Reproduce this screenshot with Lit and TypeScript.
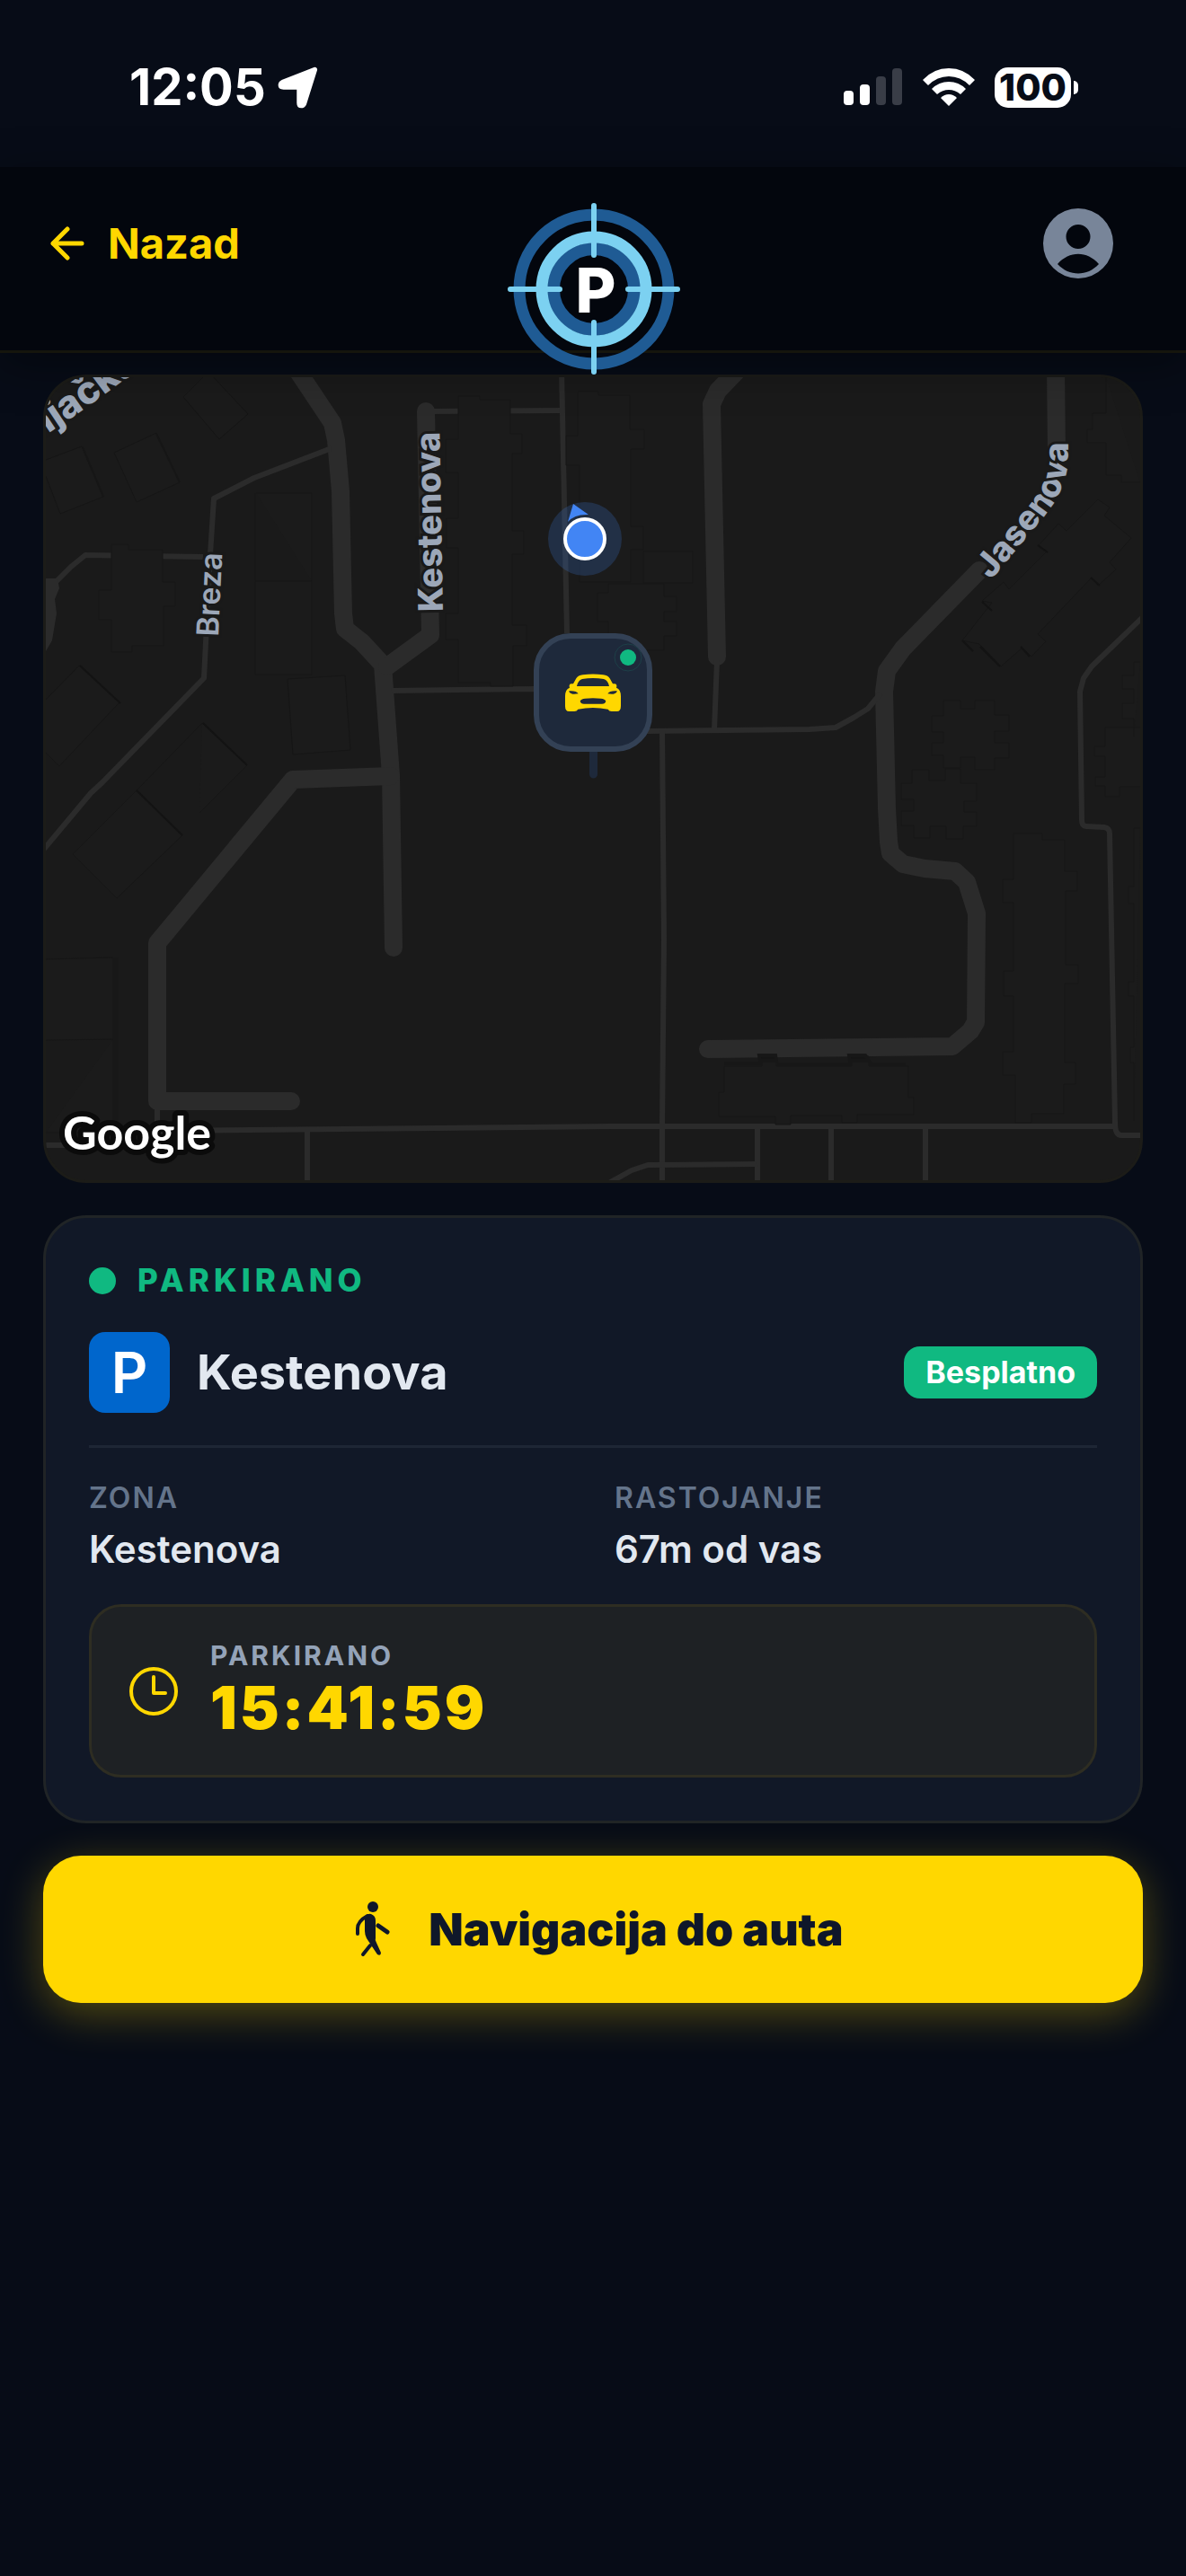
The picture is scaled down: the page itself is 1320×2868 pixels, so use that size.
import { LitElement, html, css, svg } from "lit";
import { customElement, property } from "lit/decorators.js";

@customElement("status-bar")
class StatusBar extends LitElement {
  static styles = css`
    :host {
      display: flex;
      justify-content: space-between;
      align-items: center;
      padding: 65px 120px 57px 144px;
      color: #fff;
      font-weight: 700;
      font-size: 56px;
      line-height: 64px;
    }
    .group {
      display: flex;
      align-items: center;
    }
    .time {
      gap: 12px;
    }
    .arrow {
      width: 50px;
      height: 50px;
    }
    .right {
      gap: 22px;
    }
    .signal {
      width: 66px;
      height: 44px;
    }
    .wifi {
      width: 58px;
      height: 44px;
    }
    .battery {
      display: flex;
      align-items: center;
      gap: 3px;
    }
    .level {
      width: 85px;
      height: 45px;
      border-radius: 15px;
      background: #fff;
      color: #070c17;
      font-size: 41px;
      font-weight: 800;
      line-height: 45px;
      text-align: center;
    }
    .nub {
      width: 5px;
      height: 15px;
      border-radius: 0 5px 5px 0;
      background: #fff;
    }
  `;
  render() {
    return html`
      <div class="group time">
        <span>12:05</span>
        <svg class="arrow" viewBox="0 0 46 46" aria-hidden="true">
          <path
            d="M39 5 L28 40 Q27 42 25 42 Q23 42 23 39 V24 Q23 23 22 23 H7 Q4 23 4 21 Q4 19 6 18 Z"
            fill="#fff" stroke="#fff" stroke-width="5" stroke-linejoin="round"
          />
        </svg>
      </div>
      <div class="group right">
        <svg class="signal" viewBox="0 0 66 44" aria-hidden="true">
          <rect x="0" y="26" width="11" height="16" rx="4" fill="#fff" />
          <rect x="18" y="19" width="11" height="23" rx="4" fill="#fff" />
          <rect x="36" y="10" width="11" height="32" rx="4" fill="#393d47" />
          <rect x="54" y="1" width="11" height="41" rx="4" fill="#393d47" />
        </svg>
        <svg class="wifi" viewBox="0 0 58 44" aria-hidden="true" fill="#fff">
          <path d="M0 14 Q12 1 29 1 T58 14 L52 20 Q42 10 29 10 T6 20 Z" />
          <path d="M10 24 Q18 16 29 16 T48 24 L42 30 Q36 25 29 25 T16 30 Z" />
          <path d="M20 34 Q24 30 29 30 T38 34 L29 43 Z" />
        </svg>
        <div class="battery">
          <span class="level">100</span>
          <span class="nub"></span>
        </div>
      </div>
    `;
  }
}

@customElement("app-header")
class AppHeader extends LitElement {
  static styles = css`
    :host {
      display: block;
      position: relative;
      z-index: 1;
      background: #03060d;
      border-bottom: 3px solid #15150d;
      box-shadow: 0 12px 48px rgba(0, 0, 0, 0.4);
    }
    .row {
      display: flex;
      justify-content: space-between;
      align-items: center;
      height: 170px;
      padding: 0 72px 34px 50px;
    }
    button {
      border: 0;
      padding: 0;
      background: none;
      font: inherit;
      color: inherit;
    }
    .back {
      display: flex;
      align-items: center;
      gap: 22px;
      color: #ffd700;
      font-size: 47px;
      font-weight: 700;
      line-height: 58px;
    }
    .back svg {
      width: 48px;
      height: 48px;
    }
    .profile {
      display: flex;
    }
    .profile svg {
      width: 96px;
      height: 96px;
    }
    .logo {
      position: absolute;
      left: 50%;
      top: 36px;
      width: 200px;
      height: 200px;
      margin-left: -99px;
    }
    .logo text {
      font-weight: 800;
      font-size: 69px;
    }
  `;
  render() {
    return html`
      <div class="row">
        <button class="back" type="button">
          <svg viewBox="0 0 48 48" fill="none" stroke="#ffd700" stroke-width="5"
            stroke-linecap="round" stroke-linejoin="round" aria-hidden="true">
            <path d="M25 8 L9 24 L25 40 M9 24 H41" />
          </svg>
          Nazad
        </button>
        <button class="profile" type="button" aria-label="Profil">
          <svg viewBox="-48 -48 96 96" aria-hidden="true">
            <path
              fill="#788599" fill-rule="evenodd"
              d="M0 -39 A39 39 0 1 1 0 39 A39 39 0 1 1 0 -39 Z
                 M0 -21 A13 13 0 1 0 0 6 A13 13 0 1 0 0 -21 Z
                 M-23 23 C-10 8 10 8 23 23 C10 37 -10 37 -23 23 Z"
            />
          </svg>
        </button>
      </div>
      <svg class="logo" viewBox="-100 -100 200 200" fill="none" aria-hidden="true">
        <circle r="83" stroke="#1f5b94" stroke-width="13" />
        <circle r="45" stroke="#1f5b94" stroke-width="14" />
        <circle r="58" stroke="#7cd1f1" stroke-width="13" />
        <path
          d="M-93 0 H-38 M93 0 H38 M0 -93 V-38 M0 92 V37"
          stroke="#7cd1f1" stroke-width="6" stroke-linecap="round"
        />
        <text x="2" y="26" text-anchor="middle" fill="#fff">P</text>
      </svg>
    `;
  }
}

const wideRoads = [
  "M328 408 L370 471 L374 490 L379 547 L382 683 L384 700 L403 715 L426 740 L435 863 L438 1055",
  "M474 458 L479 707 L431 742",
  "M435 864 L326 868 L175 1050 V1226 H324",
  "M825 408 L799 435 L792 450 L798 731",
  "M1175 408 L1176 506",
  "M1090 635 L1005 722 L987 747 L984 770 L987 900 L989 937 L991 950 L1005 962 L1029 967 L1063 970 L1076 982 L1087 1017 L1086 1138 L1080 1148 L1060 1165 L788 1168",
];

const narrowRoads = [
  "M369 499 L283 532 L238 555 L234 617 L227 755 L114 871 L101 883 L45 950",
  "M226 620 L95 618 L79 631 L60 650",
  "M483 458 L626 457",
  "M625 412 L631 705",
  "M436 769 L595 767 L660 790 L721 814 L901 812 L930 810 L950 799 L966 789 L980 772",
  "M798 735 L795 813",
  "M737 813 L739 1046 L737 1253 V1320",
  "M1275 684 L1215 742 L1206 755 L1202 770 L1204 913 Q1204 920 1209 920 L1229 921 Q1235 922 1235 928 L1241 1250 Q1241 1264 1248 1264 H1275",
  "M175 1226 V1259 L680 1254 H1240",
  "M45 1275 H76",
  "M342 1258 V1320",
  "M843 1254 V1320 M925 1254 V1320 M1030 1254 V1320",
  "M843 1296 L721 1297 L703 1303 L676 1318",
];

const buildings = [
  "M51 512 L91 497 L115 553 L67 572 L51 530",
  "M127 504 L174 482 L200 537 L152 559 Z",
  "M204 442 L232 414 L276 461 L244 489 Z",
  "M285 549 H347 V751 H284 V647 H347 M284 647 V549",
  "M320 756 L384 752 L390 835 L326 840 Z",
  "M124 606 H143 V612 H181 V648 H195 V675 H182 V719 H147 V726 H124 V690 H110 V657 H124 Z",
  "M51 779 L88 741 L133 782 L66 853 L51 838",
  "M225 805 L275 852 L222 905 M152 880 L203 930 L130 1000 L81 951 L152 880 L225 805",
  "M51 1068 L126 1066 V1157 L51 1158 M126 1157 V1261 H51",
  "M510 441 H534 V445 H568 V483 H581 V505 H570 V591 H583 V617 H570 V696 H586 V719 H571 V764 H546 V760 H510 V712 H496 V683 H510 V610 H497 V577 H510 V526 H496 V489 H510 Z",
  "M643 436 H666 V440 H701 V478 H717 V500 H702 V586 H716 V612 H702 V648 H645 V518 H630 V485 H643 Z",
  "M716 614 H771 V649 H716 Z",
  "M677 650 H739 V664 H753 V681 H739 V692 H753 V708 H739 V724 H677 V692 H665 V660 H677 Z",
  "M1222 556 L1235 565 L1229 574 L1259 599 L1235 626 L1242 634 L1222 652 L1215 643 L1155 706 L1164 714 L1148 731 L1138 721 L1114 742 L1090 717 L1071 713 L1104 671 L1093 669 L1117 648 L1123 656 L1165 614 L1156 607 L1178 583 L1187 591 Z",
  "M1231 420 V460 H1216 V478 H1210 V493 H1231 V529 H1248 V537 H1269",
  "M1050 780 H1069 V789 H1085 V780 H1107 V796 H1123 V814 H1107 V827 H1123 V844 H1107 V857 H1085 V843 H1069 V855 H1050 V841 H1037 V827 H1050 V815 H1037 V797 H1050 Z",
  "M1015 857 H1034 V869 H1052 V856 H1069 V872 H1087 V892 H1073 V904 H1087 V920 H1072 V934 H1053 V920 H1035 V933 H1017 V919 H1003 V903 H1017 V890 H1003 V872 H1015 Z",
  "M1128 928 H1160 V935 H1185 V970 H1199 V992 H1186 V1074 H1200 V1095 H1185 V1183 H1197 V1207 H1184 V1240 H1148 V1250 H1130 V1197 H1116 V1171 H1128 V1109 H1117 V1081 H1128 V1005 H1116 V979 H1128 Z",
  "M1269 737 H1262 V752 H1249 V767 H1262 V783 H1249 V800 H1262 V820 M1269 810 H1230 V831 H1218 V842 H1230 V865 H1219 V875 H1230 V887 H1246 V876 H1269",
  "M1269 922 H1262 V987 H1256 V1006 H1262 V1093 H1256 V1109 H1262 V1166 H1258 V1183 H1262 V1248",
  "M806 1187 H848 V1176 H864 V1187 H948 V1176 H967 V1187 H1011 V1222 H1017 V1241 H954 V1250 H937 V1242 H880 V1252 H863 V1243 H800 V1216 H806 Z",
];

@customElement("parking-map")
class ParkingMap extends LitElement {
  static styles = css`
    :host {
      display: block;
      overflow: hidden;
      border: 3px solid #1c1c18;
      border-radius: 48px;
      background: #1a1a1a;
    }
    svg {
      display: block;
      width: 100%;
      height: auto;
    }
    .label {
      fill: #9ca7b8;
      stroke: #191919;
      stroke-width: 6px;
      paint-order: stroke;
      font-weight: 800;
      font-size: 38px;
    }
    .major {
      font-size: 43px;
    }
    .minor {
      font-weight: 600;
      font-size: 34px;
    }
    .brand {
      fill: #fff;
      stroke: #0b0b0b;
      stroke-width: 12px;
      stroke-linejoin: round;
      paint-order: stroke;
      font-family: Lato, "Liberation Sans", sans-serif;
      font-weight: 700;
      font-size: 52px;
    }
  `;
  render() {
    return html`
      <svg viewBox="51 420 1218 894" role="img" aria-label="Mapa parkinga">
        <g fill="none" stroke="#2b2b2b" stroke-linejoin="round">
          <g stroke-width="20" stroke-linecap="round">
            ${wideRoads.map((d) => svg`<path d=${d} />`)}
          </g>
          <g stroke-width="6">${narrowRoads.map((d) => svg`<path d=${d} />`)}</g>
          <path d="M51 644 H64 L66 655 L61 667 L63 683 L58 713 L51 725 Z" fill="#2b2b2b" stroke="none" />
        </g>
        <g fill="#1b1b1b" stroke="#161616" stroke-width="1">
          ${buildings.map((d) => svg`<path d=${d} />`)}
        </g>
        <path
          d="M845 1175 H863 L864 1181 H846 Z M945 1175 H963 L967 1181 H946 Z M806 1184 H848 M865 1185 H948 M967 1185 H1008"
          fill="#151515" stroke="#171717" stroke-width="4"
        />
        <path d="M89 741 L134 783 M226 805 L275 852 M152 880 L203 930
          M1071 713 L1083 725 M1091 720 L1113 742 M1136 720 L1146 731 M1155 607 L1166 615 M1214 643 L1224 652 M1093 670 L1104 680"
          fill="none" stroke="#131313" stroke-width="2" />
        <path d="M92 498 L115 553 M174 483 L200 537" fill="none" stroke="#161616" stroke-width="2" />
        <path d="M129 1066 V1258" fill="none" stroke="#181818" stroke-width="6" />

        <defs>
          <path id="street-1" d="M41 491 L80 465 Q102 450 130 429 L190 388" />
          <path id="street-2" d="M243 709 L248 600" />
          <path id="street-3" d="M493 681 L489 460" />
          <path id="street-4" d="M1103 646 L1156 582 Q1189 546 1189 508 V440" />
        </defs>
        <text class="label major"><textPath href="#street-1">njačka</textPath></text>
        <text class="label minor"><textPath href="#street-2">Breza</textPath></text>
        <text class="label"><textPath href="#street-3">Kestenova</textPath></text>
        <text class="label"><textPath href="#street-4">Jasenova</textPath></text>
        <text class="brand" x="70" y="1280">Google</text>

        <circle cx="651" cy="600" r="41" fill="#4285f4" fill-opacity="0.2" />
        <path d="M638 561 L655 573 Q640 572 632 581 Z" fill="#4285f4" />
        <circle cx="651" cy="600" r="22" fill="#4285f4" stroke="#fff" stroke-width="4" />

        <path d="M656 837 H665 V862 A4 4 0 0 1 656 862 Z" fill="#1e293b" />
        <rect x="597" y="708" width="126" height="126" rx="38" fill="#1e293b" stroke="#334155" stroke-width="6" />
        <circle cx="699" cy="732" r="15" fill="#1e293b" stroke="#1d4048" stroke-width="1" />
        <circle cx="699" cy="732" r="9" fill="#10b981" />
        <g transform="translate(580 540) scale(0.3333)">
          <path
            fill="#ffd700"
            d="M147 738 V706 Q147 682 162 677 Q158 664 168 664 H174 L184 646 Q190 636 206 634 Q240 629 274 634
               Q290 636 296 646 L306 664 H312 Q322 664 318 677 Q333 682 333 706 V738 Q333 756 320 756 H302
               Q294 756 290 749 Q240 739 190 749 Q186 756 178 756 H160 Q147 756 147 738 Z"
          />
          <path
            fill="#1e293b"
            d="M186 672 Q190 652 204 648 Q240 642 276 648 Q290 652 294 672 Z
               M160 688 Q184 686 191 697 Q166 702 160 690 Z
               M320 688 Q296 686 289 697 Q314 702 320 690 Z
               M197 722 Q200 714 214 713 Q240 710 266 713 Q280 714 283 722 Q281 731 270 731 H210 Q199 731 197 722 Z"
          />
        </g>
      </svg>
    `;
  }
}

@customElement("parking-card")
class ParkingCard extends LitElement {
  @property() zone = "Kestenova";
  @property() distance = "67m od vas";
  @property() elapsed = "15:41:59";

  static styles = css`
    :host {
      display: flex;
      flex-direction: column;
      gap: 36px;
      padding: 48px;
      border: 3px solid #202426;
      border-radius: 48px;
      background: #111827;
      color: #e2e8f0;
    }
    h2,
    dl,
    dd,
    p {
      margin: 0;
    }
    .status {
      display: flex;
      align-items: center;
      gap: 24px;
      color: #10b981;
      font-size: 35px;
      font-weight: 800;
      line-height: 43px;
      letter-spacing: 5px;
    }
    .dot {
      width: 30px;
      height: 30px;
      border-radius: 50%;
      background: #10b981;
    }
    .place {
      display: flex;
      align-items: center;
      gap: 30px;
    }
    .sign {
      width: 90px;
      height: 90px;
      border-radius: 18px;
      background: #0066cc;
      color: #fff;
      font-size: 63px;
      font-weight: 600;
      line-height: 90px;
      text-align: center;
    }
    h2 {
      flex: 1;
      font-size: 54px;
      font-weight: 700;
      line-height: 64px;
    }
    .badge {
      padding: 8px 24px;
      border-radius: 18px;
      background: #10b981;
      color: #fff;
      font-size: 34px;
      font-weight: 700;
      line-height: 42px;
    }
    .facts {
      display: grid;
      grid-template-columns: 1fr 1fr;
      gap: 48px;
    }
    .rule {
      height: 3px;
      background: #1e2635;
    }
    dt {
      margin-bottom: 12px;
      color: #64748b;
      font-size: 32px;
      font-weight: 600;
      line-height: 40px;
      letter-spacing: 2px;
    }
    dd {
      font-size: 42px;
      font-weight: 600;
      line-height: 50px;
    }
    .timer {
      display: flex;
      align-items: center;
      gap: 36px;
      padding: 36px 42px;
      border: 3px solid #2e2d22;
      border-radius: 36px;
      background: #1e2124;
    }
    .timer svg {
      width: 54px;
      height: 54px;
    }
    .caption {
      color: #94a3b8;
      font-size: 30px;
      font-weight: 700;
      line-height: 37px;
      letter-spacing: 3px;
    }
    .elapsed {
      color: #ffd700;
      font-size: 66px;
      font-weight: 900;
      line-height: 78px;
      letter-spacing: 3px;
    }
  `;
  render() {
    return html`
      <div class="status"><span class="dot"></span>PARKIRANO</div>
      <div class="place">
        <span class="sign">P</span>
        <h2>${this.zone}</h2>
        <span class="badge">Besplatno</span>
      </div>
      <div class="rule"></div>
      <dl class="facts">
        <div>
          <dt>ZONA</dt>
          <dd>${this.zone}</dd>
        </div>
        <div>
          <dt>RASTOJANJE</dt>
          <dd>${this.distance}</dd>
        </div>
      </dl>
      <div class="timer">
        <svg viewBox="0 0 54 54" fill="none" stroke="#ffd700" stroke-width="4"
          stroke-linecap="round" stroke-linejoin="round" aria-hidden="true">
          <circle cx="27" cy="27" r="25" />
          <path d="M27 11 V29 H40" />
        </svg>
        <div>
          <p class="caption">PARKIRANO</p>
          <p class="elapsed">${this.elapsed}</p>
        </div>
      </div>
    `;
  }
}

@customElement("app-root")
class AppRoot extends LitElement {
  static styles = css`
    :host {
      display: block;
      min-height: 100vh;
      background: #070c17;
      font-family: Inter, "Liberation Sans", sans-serif;
    }
    main {
      display: flex;
      flex-direction: column;
      gap: 36px;
      padding: 24px 48px 48px;
    }
    .navigate {
      display: flex;
      justify-content: center;
      align-items: center;
      gap: 30px;
      padding: 48px;
      border: 0;
      border-radius: 42px;
      background: #ffd700;
      box-shadow: 0 12px 48px rgba(255, 215, 0, 0.3);
      color: #0f172a;
      font-family: inherit;
      font-size: 50px;
      font-weight: 900;
      line-height: 68px;
    }
    .navigate svg {
      width: 66px;
      height: 68px;
    }
  `;
  render() {
    return html`
      <status-bar></status-bar>
      <app-header></app-header>
      <main>
        <parking-map></parking-map>
        <parking-card></parking-card>
        <button class="navigate" type="button">
          <svg viewBox="0 0 66 68" fill="none" stroke="#0f172a" stroke-linecap="round"
            stroke-linejoin="round" aria-hidden="true">
            <circle cx="34" cy="9" r="6" fill="#0f172a" stroke="none" />
            <path
              d="M25 20 Q28 16 32 17 Q37 19 37 24 V44 Q36 46 38 49 L43 60 Q43 64 39 62 L27 44 Q25 40 25 36 Z"
              fill="#0f172a" stroke="none"
            />
            <path d="M28 19 Q17 25 17 33 V39" stroke-width="4" />
            <path d="M40 30 L50 37" stroke-width="5" />
            <path d="M31 52 L23 62" stroke-width="4" />
          </svg>
          Navigacija do auta
        </button>
      </main>
    `;
  }
}
